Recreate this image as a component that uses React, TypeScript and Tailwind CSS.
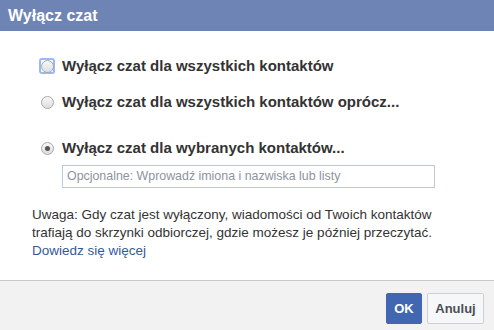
export default function App() {
  const options = [
    { label: "Wyłącz czat dla wszystkich kontaktów", checked: false, focused: true },
    { label: "Wyłącz czat dla wszystkich kontaktów oprócz...", checked: false, focused: false },
    { label: "Wyłącz czat dla wybranych kontaktów...", checked: true, focused: false },
  ];

  return (
    <div className="w-[494px] h-[330px] bg-white flex flex-col font-['Liberation_Sans',Arial,sans-serif] text-[#1d2129]">
      <div className="h-[31px] bg-[#6d84b4] px-2 flex items-center">
        <span className="text-white font-bold text-[16px]">Wyłącz czat</span>
      </div>
      <div className="flex-1 pt-[25px] pl-[39px] pr-[40px]">
        <div className="flex flex-col">
          {options.map((o, i) => (
            <div key={i} className={i === 0 ? "" : i === 1 ? "mt-[16px]" : "mt-[26px]"}>
              <div className="flex items-center h-[20px]">
                <span
                  className={`w-[16px] h-[16px] rounded-[3px] flex items-center justify-center ${
                    o.focused ? "border-2 border-[#9ab8f7]" : ""
                  }`}
                >
                  <span className="w-[13px] h-[13px] shrink-0 rounded-full border border-[#a9a9a9] bg-gradient-to-b from-[#f8f8f8] to-[#dddddd] flex items-center justify-center">
                    {o.checked && <span className="w-[5px] h-[5px] rounded-full bg-[#555]" />}
                  </span>
                </span>
                <span className="ml-[7px] font-bold text-[15px] text-[#333]">{o.label}</span>
              </div>
              {o.checked && (
                <div className="ml-[23px] mt-[7px] w-[373px] h-[23px] border border-[#bdc7d8] flex items-center px-[4px] text-[12.4px] text-[#8d949e]">
                  Opcjonalne: Wprowadź imiona i nazwiska lub listy
                </div>
              )}
            </div>
          ))}
        </div>
      </div>
      <div className="pl-[32px] pr-[30px] pb-[20px] text-[13.5px] leading-[18px] text-[#333]">
        <p>
          Uwaga: Gdy czat jest wyłączony, wiadomości od Twoich kontaktów trafiają do skrzynki odbiorczej, gdzie możesz je później przeczytać.
        </p>
        <a className="text-[#365899]">Dowiedz się więcej</a>
      </div>
      <div className="h-[50px] border-t border-[#c8c8c8] bg-[#f2f2f2] flex items-start pt-[12px] justify-end pr-[10px] gap-[5px]">
        <button className="h-[31px] w-[36px] bg-[#4267b2] border border-[#4267b2] rounded-[2px] text-white font-bold text-[13px]">OK</button>
        <button className="h-[31px] w-[57px] bg-[#f6f7f9] border border-[#ced0d4] rounded-[2px] text-[#4b4f56] font-bold text-[13px]">Anuluj</button>
      </div>
    </div>
  );
}
